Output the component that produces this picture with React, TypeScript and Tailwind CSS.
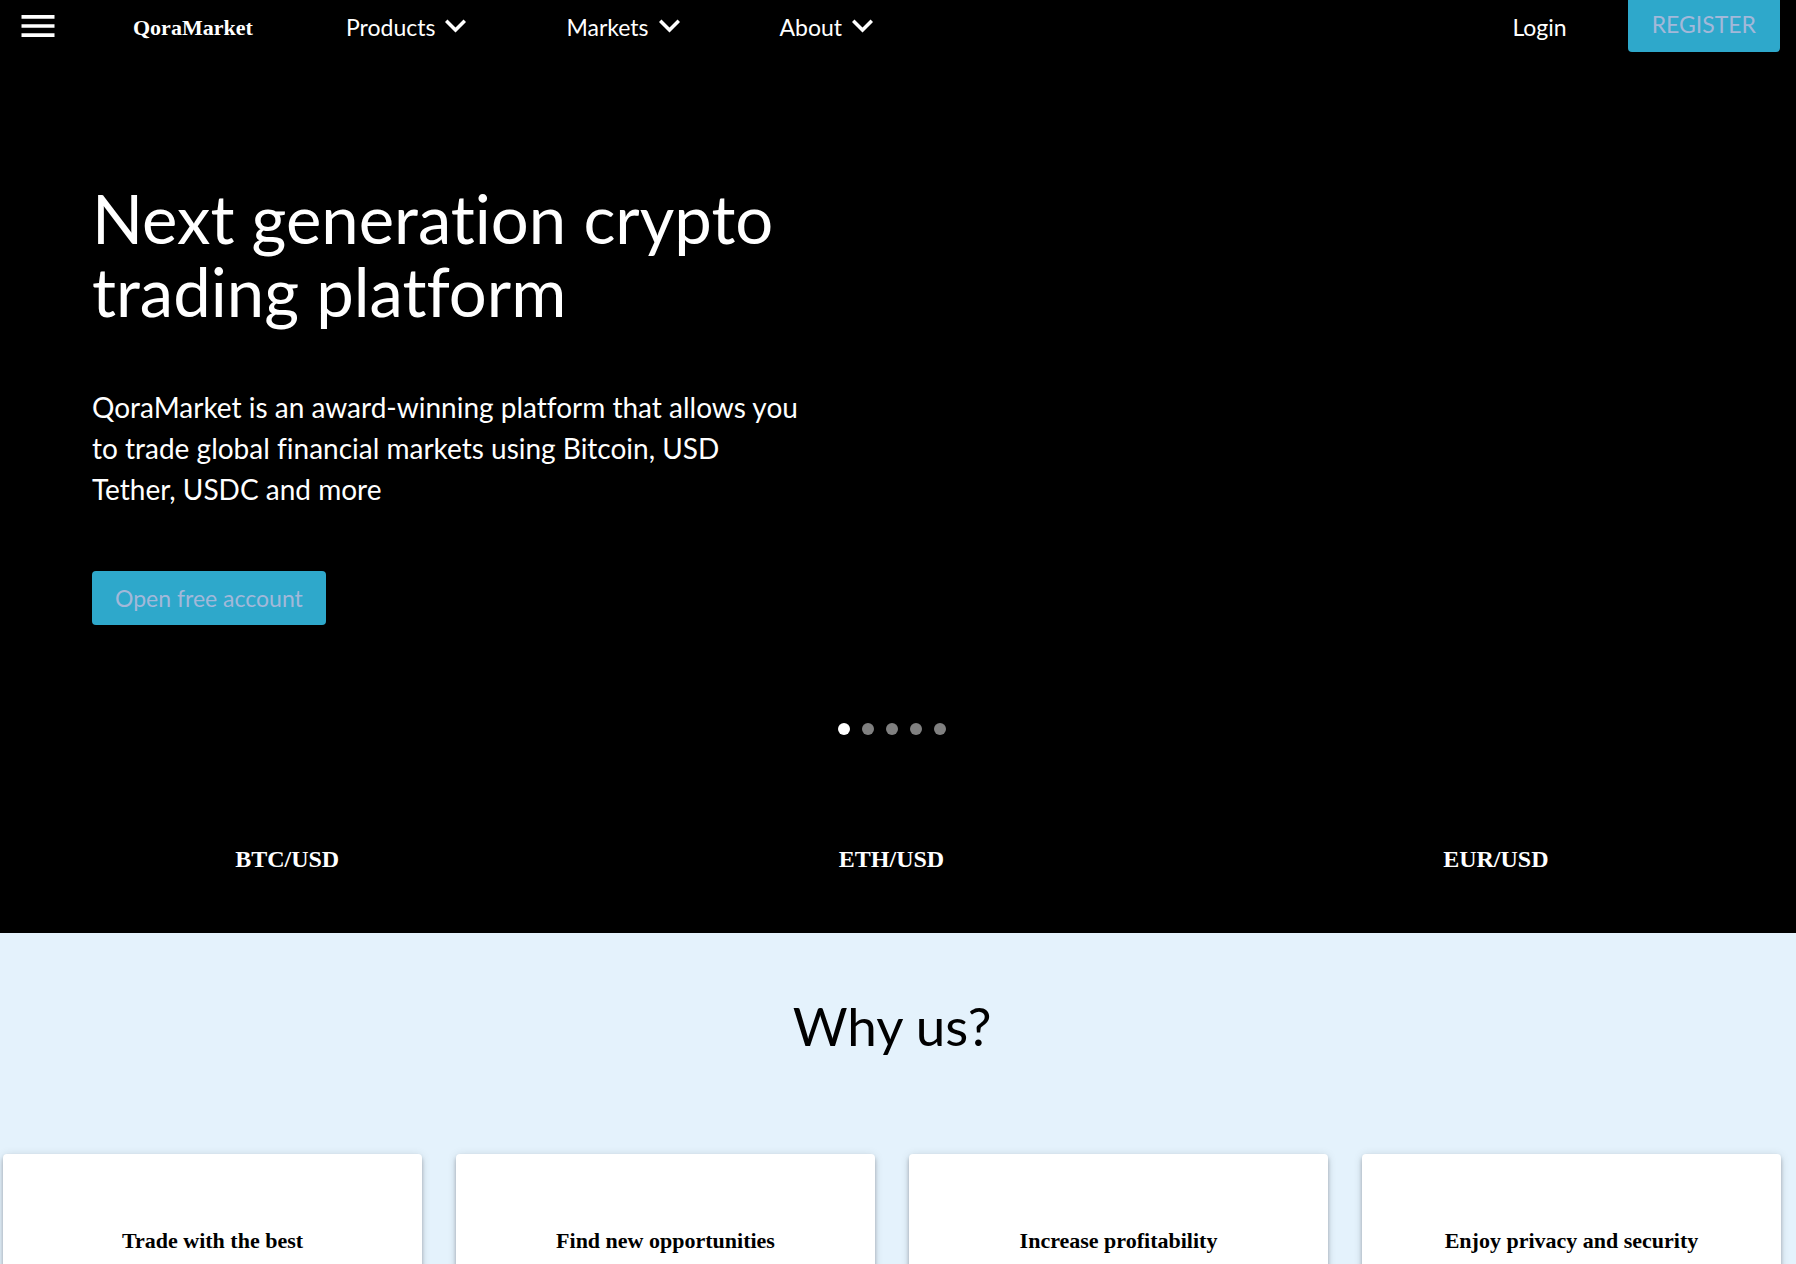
import React from "react";

const navItems = ["Products", "Markets", "About"];
const pairs = ["BTC/USD", "ETH/USD", "EUR/USD"];
const slides = [0, 1, 2, 3, 4];
const reasons = [
  "Trade with the best",
  "Find new opportunities",
  "Increase profitability",
  "Enjoy privacy and security",
];

function Chevron() {
  return (
    <svg className="ml-[10px] h-[14px] w-[21px]" viewBox="6 8.3 12 8" fill="currentColor" aria-hidden="true">
      <path d="M16.59 8.59 12 13.17 7.41 8.59 6 10l6 6 6-6z" />
    </svg>
  );
}

function Header() {
  return (
    <header className="flex h-[52px] items-start justify-between pr-4">
      <div className="flex h-[52px] items-center">
        <button aria-label="Menu" className="ml-4 size-11">
          <svg className="size-11" viewBox="0 0 24 24" fill="currentColor" aria-hidden="true">
            <path d="M3 18h18v-2H3v2zm0-5h18v-2H3v2zm0-7v2h18V6H3z" />
          </svg>
        </button>
        <a
          href="#"
          className="ml-[73px] w-[213px] pt-[2px] font-['Liberation_Serif',serif] text-[22px] font-bold"
        >
          QoraMarket
        </a>
        <nav className="flex gap-[100px]">
          {navItems.map((item) => (
            <button key={item} className="flex items-center text-[23px] leading-8">
              <span className="pt-[2px]">{item}</span>
              <Chevron />
            </button>
          ))}
        </nav>
      </div>
      <div className="flex items-start">
        <a href="#" className="mr-[61px] py-[11px] text-[23px] leading-8">
          Login
        </a>
        <button className="h-[52px] rounded-b-[4px] bg-[#2ea8cb] px-6 pb-1 text-[23px] text-[#a3b8d9]">
          REGISTER
        </button>
      </div>
    </header>
  );
}

export default function App() {
  return (
    <div className="h-screen overflow-hidden bg-[#e4f2fc] font-[Lato,sans-serif] [font-variant-ligatures:none]">
      <div className="bg-black pb-[58px] text-white">
        <Header />
        <section className="px-[92px] pt-[130px]">
          <h1 className="max-w-[700px] text-[67px] leading-[73px]">
            Next generation crypto trading platform
          </h1>
          <p className="mt-[59px] max-w-[710px] text-[28px] leading-[41px]">
            QoraMarket is an award-winning platform that allows you to trade global financial markets using
            Bitcoin, USD Tether, USDC and more
          </p>
          <button className="mt-[61px] h-[54px] rounded-[4px] bg-[#2ea8cb] px-[23px] text-[23px] text-[#a3b8d9]">
            Open free account
          </button>
        </section>
        <div className="mt-[98px] mr-3 flex justify-center gap-3">
          {slides.map((slide) => (
            <button
              key={slide}
              aria-label={`Slide ${slide + 1}`}
              className={slide === 0 ? "size-3 rounded-full bg-white" : "size-3 rounded-full bg-[#808080]"}
            />
          ))}
        </div>
        <div className="mt-[108px] -mr-[2px] -ml-[15px] grid grid-cols-3 text-center font-['Liberation_Serif',serif] text-[24px] leading-8 font-bold">
          {pairs.map((pair) => (
            <h2 key={pair}>{pair}</h2>
          ))}
        </div>
      </div>
      <section className="pr-[15px] pl-[3px]">
        <h2 className="pt-[61px] text-center text-[53px] leading-16 text-black">Why us?</h2>
        <div className="mt-[96px] grid grid-cols-4 gap-[34px]">
          {reasons.map((reason) => (
            <article
              key={reason}
              className="h-80 rounded-[4px] bg-white pt-[73px] text-center shadow-[0_2px_4px_-1px_rgba(0,0,0,0.2),0_4px_5px_rgba(0,0,0,0.14),0_1px_10px_rgba(0,0,0,0.12)]"
            >
              <h3 className="font-['Liberation_Serif',serif] text-[22px] leading-7 font-bold text-black">
                {reason}
              </h3>
            </article>
          ))}
        </div>
      </section>
    </div>
  );
}
